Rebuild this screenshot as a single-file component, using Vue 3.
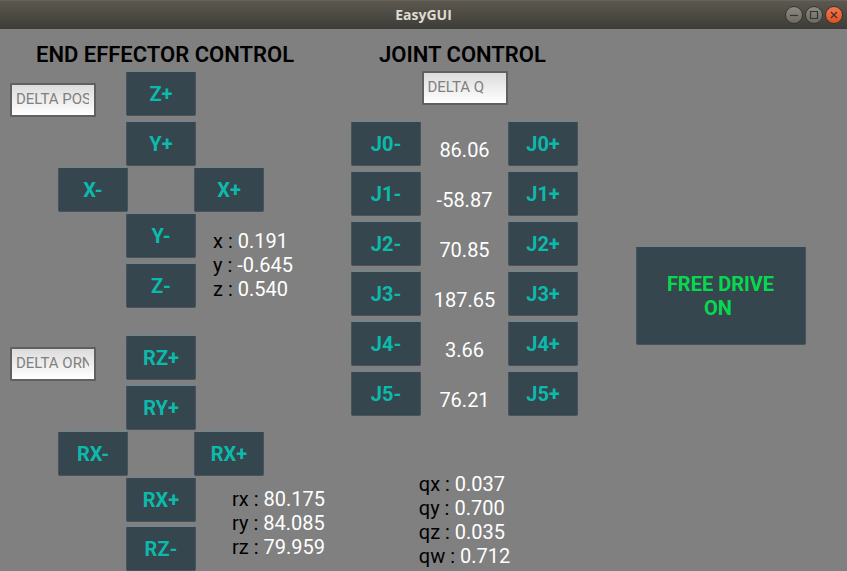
<script setup>
import { ref } from 'vue'

const position = {
  id: 'position',
  placeholder: 'DELTA POS',
  buttons: [
    { slot: 'top', label: 'Z+' },
    { slot: 'up', label: 'Y+' },
    { slot: 'left', label: 'X-' },
    { slot: 'right', label: 'X+' },
    { slot: 'down', label: 'Y-' },
    { slot: 'bottom', label: 'Z-' },
  ],
  readout: [
    { name: 'x', value: '0.191' },
    { name: 'y', value: '-0.645' },
    { name: 'z', value: '0.540' },
  ],
}

const orientation = {
  id: 'orientation',
  placeholder: 'DELTA ORN',
  buttons: [
    { slot: 'top', label: 'RZ+' },
    { slot: 'up', label: 'RY+' },
    { slot: 'left', label: 'RX-' },
    { slot: 'right', label: 'RX+' },
    { slot: 'down', label: 'RX+' },
    { slot: 'bottom', label: 'RZ-' },
  ],
  readout: [
    { name: 'rx', value: '80.175' },
    { name: 'ry', value: '84.085' },
    { name: 'rz', value: '79.959' },
  ],
}

const pads = [position, orientation]
const joints = ['86.06', '-58.87', '70.85', '187.65', '3.66', '76.21']
const quaternion = [
  { name: 'qx', value: '0.037' },
  { name: 'qy', value: '0.700' },
  { name: 'qz', value: '0.035' },
  { name: 'qw', value: '0.712' },
]

const deltas = ref({ position: '', orientation: '' })
const deltaQ = ref('')
</script>

<template>
  <div class="window">
    <header class="titlebar">
      <span class="caption">EasyGUI</span>
      <div class="window-controls">
        <button class="control" type="button" aria-label="Minimize">
          <svg viewBox="0 0 16 16"><path d="M4 8.5h8" /></svg>
        </button>
        <button class="control" type="button" aria-label="Maximize">
          <svg viewBox="0 0 16 16"><path d="M4.5 4.5h7v7h-7z" /></svg>
        </button>
        <button class="control close" type="button" aria-label="Close">
          <svg viewBox="0 0 16 16"><path d="M5 5l6 6M11 5l-6 6" /></svg>
        </button>
      </div>
    </header>

    <main class="panels">
      <section class="effector">
        <h2 class="heading">END EFFECTOR CONTROL</h2>
        <div v-for="pad in pads" :key="pad.id" class="pad" :class="pad.id">
          <input
            v-model="deltas[pad.id]"
            class="field"
            type="text"
            :placeholder="pad.placeholder"
            :aria-label="pad.placeholder"
          />
          <button
            v-for="button in pad.buttons"
            :key="button.slot"
            class="key"
            :class="button.slot"
            type="button"
          >{{ button.label }}</button>
          <div class="readout">
            <div v-for="row in pad.readout" :key="row.name">
              {{ row.name }} : <span class="value">{{ row.value }}</span>
            </div>
          </div>
        </div>
      </section>

      <section class="joint-panel">
        <h2 class="heading">JOINT CONTROL</h2>
        <input v-model="deltaQ" class="field" type="text" placeholder="DELTA Q" aria-label="DELTA Q" />
        <div class="joints">
          <div v-for="(angle, index) in joints" :key="index" class="joint">
            <button class="key" type="button">J{{ index }}-</button>
            <span class="angle">{{ angle }}</span>
            <button class="key" type="button">J{{ index }}+</button>
          </div>
        </div>
        <div class="readout">
          <div v-for="row in quaternion" :key="row.name">
            {{ row.name }} : <span class="value">{{ row.value }}</span>
          </div>
        </div>
      </section>

      <section class="drive">
        <button class="key drive-key" type="button">FREE DRIVE<br />ON&nbsp;</button>
      </section>
    </main>
  </div>
</template>

<style>
body {
  background: #808080;
}
</style>

<style scoped>
.window {
  min-height: 100vh;
  display: flex;
  flex-direction: column;
  background: #808080;
  color: #000;
  font-family: Roboto, "Liberation Sans", sans-serif;
  font-size: 20px;
  line-height: 24px;
}

.titlebar {
  display: grid;
  grid-template-columns: 1fr auto 1fr;
  align-items: center;
  height: 29px;
  padding: 0 4px;
  box-sizing: border-box;
  background: linear-gradient(#5c584f, #3d3c37);
  border-top: 1px solid #66635a;
}

.caption {
  grid-column: 2;
  color: #dfdbd2;
  font-family: "Open Sans", sans-serif;
  font-size: 14px;
  font-weight: 700;
  line-height: 16px;
}

.window-controls {
  display: flex;
  justify-content: flex-end;
  gap: 2px;
}

.control {
  width: 18px;
  height: 18px;
  padding: 0;
  border: 1px solid #35342f;
  border-radius: 50%;
  box-sizing: border-box;
  background: linear-gradient(#8c8a82, #6c6a63);
}

.control svg {
  display: block;
  width: 100%;
  height: 100%;
  fill: none;
  stroke: #35342f;
  stroke-width: 1.2;
}

.control.close {
  background: linear-gradient(#f4774e, #e2511f);
}

.panels {
  flex: 1;
  display: grid;
  grid-template-columns: 341px 227px 1fr;
  padding: 12px 0 0 10px;
}

.heading {
  margin: 0 0 2px;
  font-size: 22px;
  font-weight: 600;
  line-height: 28px;
  text-align: center;
}

.effector .heading {
  padding-right: 31px;
}

.pad {
  display: grid;
  grid-template-columns: 49px 68px 68px 1fr;
  grid-template-rows: 50px 46px 46px 50px 44px;
}

.pad.orientation {
  grid-template-rows: 50px 46px 46px 49px 44px;
  margin-top: 28px;
}

.pad .key {
  margin: 0 -1px;
}

.pad .field {
  grid-area: 1 / 1 / 2 / 3;
  margin-top: 12px;
}

.top { grid-area: 1 / 3; }
.up { grid-area: 2 / 3; }
.left { grid-area: 3 / 2; }
.right { grid-area: 3 / 4; }
.down { grid-area: 4 / 3; }
.bottom { grid-area: 5 / 3; }

.key {
  width: 70px;
  height: 45px;
  padding: 0;
  box-sizing: border-box;
  border: 1px solid #46545b;
  border-top-color: #6f8791;
  border-bottom-color: #4a5358;
  border-radius: 2px;
  background: #36464e;
  color: #0bbaab;
  font: inherit;
  font-weight: 700;
}

.field {
  width: 86px;
  height: 34px;
  padding: 0 5px 3px 4px;
  box-sizing: border-box;
  border: 2px solid #606060;
  border-radius: 1px;
  background: linear-gradient(#dcdcdc, #fff);
  color: #000;
  font: inherit;
  font-size: 15px;
}

.field::placeholder {
  color: #808080;
  opacity: 1;
}

.value {
  color: #fff;
}

.pad .readout {
  grid-area: 4 / 4 / 6 / 5;
  padding: 16px 0 0 18px;
}

.orientation .readout {
  padding: 10px 0 0 37px;
}

.joint-panel {
  display: flex;
  flex-direction: column;
  align-items: center;
}

.joint-panel .heading {
  align-self: stretch;
  padding-right: 4px;
}

.joints {
  align-self: stretch;
  display: grid;
  gap: 5px;
  margin-top: 16px;
}

.joint {
  display: flex;
  justify-content: space-between;
}

.angle {
  padding-top: 17px;
  color: #fff;
}

.joint-panel .readout {
  margin-top: 56px;
}

.drive {
  display: flex;
  justify-content: center;
  align-items: flex-start;
  padding: 205px 0 0 16px;
}

.drive-key {
  width: 170px;
  height: 99px;
  color: #06d94f;
}
</style>
